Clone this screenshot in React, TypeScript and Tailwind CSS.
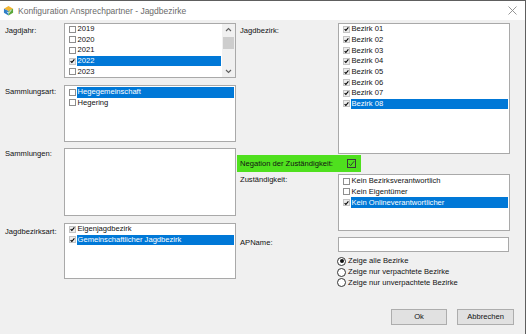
import React from "react";

type Item = { label: string; checked?: boolean; selected?: boolean };

const CheckMark = ({ size = 7 }: { size?: number }) => (
  <svg width={size} height={size} viewBox="0 0 8 8" fill="none">
    <path d="M1 4.2 L3 6.4 L7 1.4" stroke="#000" strokeWidth="1.8" />
  </svg>
);

const ListBox = ({
  items,
  className,
  scroll,
}: {
  items: Item[];
  className: string;
  scroll?: boolean;
}) => (
  <div className={`flex border border-[#a9a9a9] bg-white ${className}`}>
    <div className="flex flex-1 flex-col">
      {items.map((it) => (
        <div key={it.label} className="flex h-[10.67px] items-center">
          <div className="flex w-[11px] justify-end">
            <div
              className={`flex h-[7px] w-[7px] items-center justify-center border ${
                it.checked
                  ? "border-[#c4c4c4] bg-[#ececec]"
                  : "border-[#8e8e8e] bg-white"
              }`}
            >
              {it.checked && <CheckMark size={6} />}
            </div>
          </div>
          <div
            className={`ml-[1px] mr-[1px] flex h-full flex-1 items-center pl-[0.5px] ${
              it.selected ? "bg-[#0078d7] text-white" : "text-[#111]"
            }`}
          >
            {it.label}
          </div>
        </div>
      ))}
    </div>
    {scroll && (
      <div className="flex w-[13px] flex-col items-center bg-[#f0f0f0]">
        <svg width="7" height="10" viewBox="0 0 7 10" className="mt-[1px]">
          <path d="M1 6 L3.5 3.5 L6 6" stroke="#606060" strokeWidth="1.1" fill="none" />
        </svg>
        <div className="mt-[2px] h-[12px] w-[11px] bg-[#cdcdcd]" />
        <div className="flex-1" />
        <svg width="7" height="10" viewBox="0 0 7 10" className="mb-[1px]">
          <path d="M1 4 L3.5 6.5 L6 4" stroke="#606060" strokeWidth="1.1" fill="none" />
        </svg>
      </div>
    )}
  </div>
);

const Radio = ({ label, on }: { label: string; on?: boolean }) => (
  <div className="flex h-[10.8px] items-center">
    <div className="flex h-[9px] w-[9px] items-center justify-center rounded-full border border-[#333] bg-white">
      {on && <div className="h-[4px] w-[4px] rounded-full bg-[#111]" />}
    </div>
    <span className="ml-[2px] text-[#111]">{label}</span>
  </div>
);

const AppIcon = () => (
  <svg width="11" height="11" viewBox="0 0 12 12">
    <path d="M1 4 L6 1 L11 4 L6 6.5 Z" fill="#f2b632" />
    <path d="M1 4 L6 6.5 L6 11.5 L1 8.5 Z" fill="#2f7fc8" />
    <path d="M11 4 L6 6.5 L6 11.5 L11 8.5 Z" fill="#5aa83a" />
    <path d="M4.5 7.5 L6 9 L9 5.5" stroke="#fff" strokeWidth="1" fill="none" />
  </svg>
);

export default function App() {
  const years: Item[] = [
    { label: "2019" },
    { label: "2020" },
    { label: "2021" },
    { label: "2022", checked: true, selected: true },
    { label: "2023" },
  ];
  const bezirke: Item[] = [1, 2, 3, 4, 5, 6, 7, 8].map((n) => ({
    label: `Bezirk 0${n}`,
    checked: true,
    selected: n === 8,
  }));

  return (
    <div
      className="h-[334px] w-[526px] overflow-hidden border-t border-r border-[#5e5e5e] bg-[#f0f0f0] text-[7.6px] leading-[10px] text-[#111]"
      style={{ fontFamily: '"Liberation Sans", Arial, sans-serif' }}
    >
      {/* title bar */}
      <div className="flex h-[19px] items-center bg-white pl-[3px] pr-[8px]">
        <AppIcon />
        <span className="ml-[4px] text-[8.5px] text-[#6a6a6a]">
          Konfiguration Ansprechpartner - Jagdbezirke
        </span>
        <div className="flex-1" />
        <svg width="9" height="9" viewBox="0 0 9 9">
          <path d="M0.5 0.5 L8.5 8.5 M8.5 0.5 L0.5 8.5" stroke="#8a8a8a" strokeWidth="0.9" />
        </svg>
      </div>

      <div className="flex">
        {/* left column */}
        <div className="flex w-[236px] flex-col pl-[5px] pt-[3px]">
          <div className="flex">
            <div className="w-[59px] pt-[3px]">Jagdjahr:</div>
            <ListBox items={years} scroll className="h-[55px] w-[172px]" />
          </div>
          <div className="mt-[7px] flex">
            <div className="w-[59px] pt-[2px]">Sammlungsart:</div>
            <ListBox
              items={[
                { label: "Hegegemeinschaft", selected: true },
                { label: "Hegering" },
              ]}
              className="h-[57px] w-[172px] pt-[1px]"
            />
          </div>
          <div className="mt-[6px] flex">
            <div className="w-[59px] pt-[1px]">Sammlungen:</div>
            <ListBox items={[]} className="h-[68px] w-[172px]" />
          </div>
          <div className="mt-[7px] flex">
            <div className="w-[59px] pt-[4px]">Jagdbezirksart:</div>
            <ListBox
              items={[
                { label: "Eigenjagdbezirk", checked: true },
                { label: "Gemeinschaftlicher Jagdbezirk", checked: true, selected: true },
              ]}
              className="h-[56px] w-[172px]"
            />
          </div>
        </div>

        {/* right column */}
        <div className="ml-[4px] flex w-[274px] flex-col pt-[3px]">
          <div className="flex">
            <div className="w-[98px] pt-[3px]">Jagdbezirk:</div>
            <ListBox items={bezirke} className="h-[131px] w-[172px]" />
          </div>
          <div className="-ml-[3px] mt-[1px] flex h-[17px] w-[124px] items-center justify-between bg-[#4fe01e] pl-[3px] pr-[5px]">
            <span>Negation der Zuständigkeit:</span>
            <div className="flex h-[9px] w-[9px] items-center justify-center border border-[#3a3a3a]">
              <svg width="7" height="7" viewBox="0 0 8 8" fill="none">
                <path d="M1 4.2 L3 6.4 L7 1.4" stroke="#2a4a2a" strokeWidth="1.1" />
              </svg>
            </div>
          </div>
          <div className="mt-[2px] flex">
            <div className="w-[98px] pt-[1px]">Zuständigkeit:</div>
            <ListBox
              items={[
                { label: "Kein Bezirksverantwortlich" },
                { label: "Kein Eigentümer" },
                { label: "Kein Onlineverantwortlicher", checked: true, selected: true },
              ]}
              className="h-[57px] w-[172px] pt-[1px]"
            />
          </div>
          <div className="mt-[6px] flex">
            <div className="w-[98px] pt-[1px]">APName:</div>
            <div className="h-[15px] w-[171px] border border-[#a9a9a9] bg-white" />
          </div>
          <div className="ml-[97px] mt-[4px] flex flex-col">
            <Radio label="Zeige alle Bezirke" on />
            <Radio label="Zeige nur verpachtete Bezirke" />
            <Radio label="Zeige nur unverpachtete Bezirke" />
          </div>
          <div className="mt-[21px] flex justify-end gap-[10px]">
            <button className="flex h-[16px] w-[56px] items-center justify-center border border-[#adadad] bg-[#e1e1e1]">
              Ok
            </button>
            <button className="flex h-[16px] w-[57px] items-center justify-center border border-[#adadad] bg-[#e1e1e1]">
              Abbrechen
            </button>
          </div>
        </div>
      </div>
    </div>
  );
}
